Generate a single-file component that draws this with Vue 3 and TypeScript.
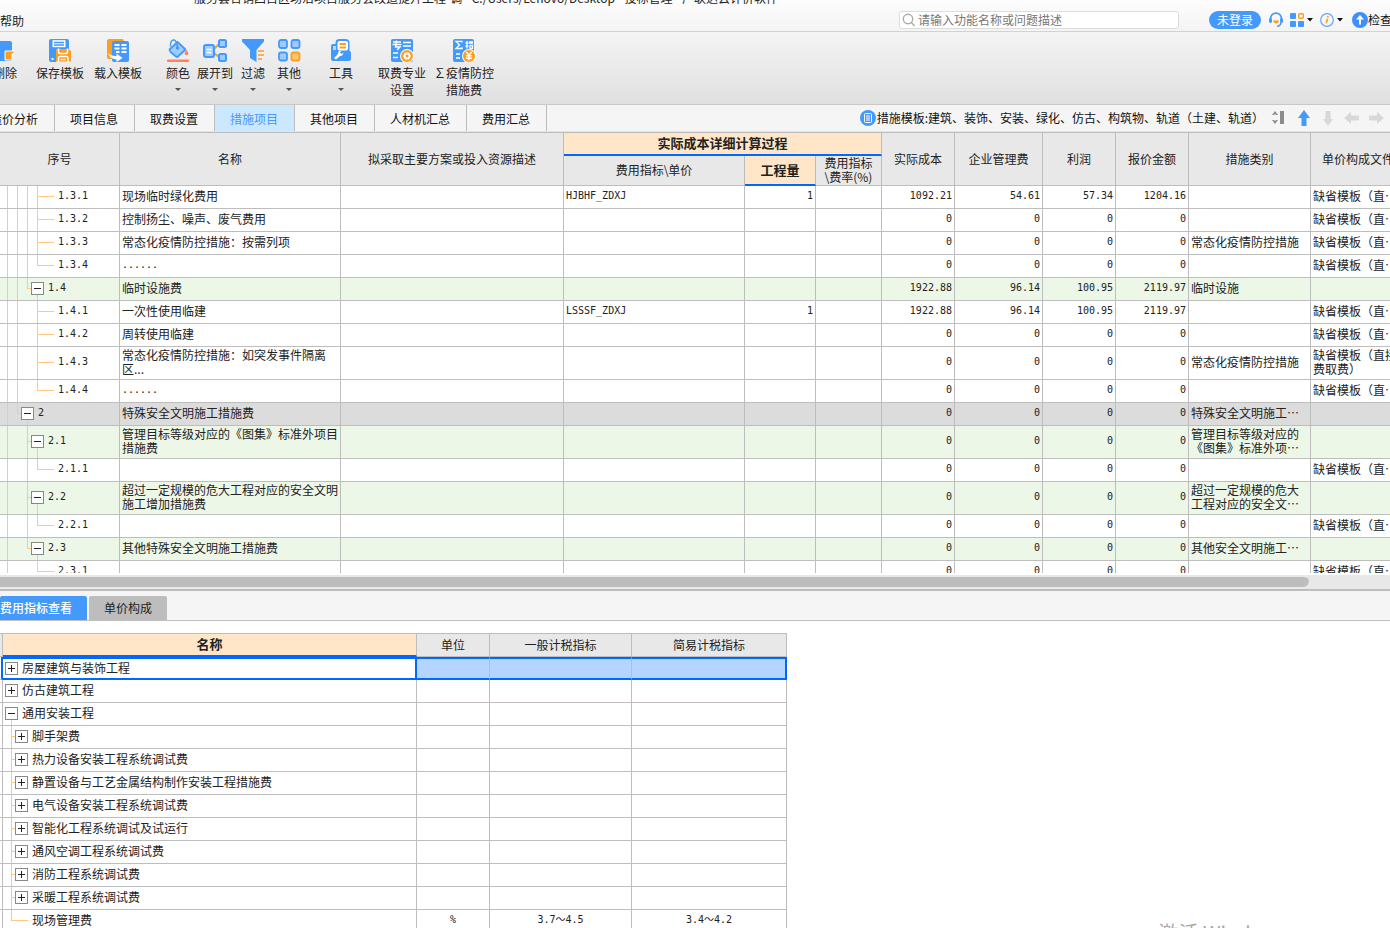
<script setup lang="ts">
import { ref } from 'vue'

type Guide = 'v' | 't' | 'l' | 'n'

interface CostRow {
  no: string
  guides: Guide[]
  open?: boolean
  name: string
  code?: string
  qty?: string
  cost: string
  manage: string
  profit: string
  quote: string
  category?: string
  file?: string
  tone?: 'green' | 'gray'
  tall?: boolean
}

interface IndexRow {
  name: string
  guides: Guide[]
  sign?: '+' | '-'
  unit?: string
  general?: string
  simple?: string
}

const tpl = '缺省模板（直⋯'
const zero = { cost: '0', manage: '0', profit: '0', quote: '0' }
const temp = { cost: '1922.88', manage: '96.14', profit: '100.95', quote: '2119.97' }

const costRows: CostRow[] = [
  { no: '1.3.1', guides: ['v', 'v', 'v', 't'], name: '现场临时绿化费用', code: 'HJBHF_ZDXJ', qty: '1', cost: '1092.21', manage: '54.61', profit: '57.34', quote: '1204.16', file: tpl },
  { no: '1.3.2', guides: ['v', 'v', 'v', 't'], name: '控制扬尘、噪声、废气费用', ...zero, file: tpl },
  { no: '1.3.3', guides: ['v', 'v', 'v', 't'], name: '常态化疫情防控措施：按需列项', ...zero, category: '常态化疫情防控措施', file: tpl },
  { no: '1.3.4', guides: ['v', 'v', 'v', 'l'], name: '......', ...zero, file: tpl },
  { no: '1.4', guides: ['v', 'v', 'l'], open: true, name: '临时设施费', ...temp, category: '临时设施', tone: 'green' },
  { no: '1.4.1', guides: ['v', 'v', 'n', 't'], name: '一次性使用临建', code: 'LSSSF_ZDXJ', qty: '1', ...temp, file: tpl },
  { no: '1.4.2', guides: ['v', 'v', 'n', 't'], name: '周转使用临建', ...zero, file: tpl },
  { no: '1.4.3', guides: ['v', 'v', 'n', 't'], name: '常态化疫情防控措施：如突发事件隔离\n区...', ...zero, category: '常态化疫情防控措施', file: '缺省模板（直接\n费取费）', tall: true },
  { no: '1.4.4', guides: ['v', 'v', 'n', 'l'], name: '......', ...zero, file: tpl },
  { no: '2', guides: ['v', 'l'], open: true, name: '特殊安全文明施工措施费', ...zero, category: '特殊安全文明施工⋯', tone: 'gray' },
  { no: '2.1', guides: ['v', 'n', 't'], open: true, name: '管理目标等级对应的《图集》标准外项目\n措施费', ...zero, category: '管理目标等级对应的\n《图集》标准外项⋯', tone: 'green', tall: true },
  { no: '2.1.1', guides: ['v', 'n', 'v', 'l'], name: '', ...zero, file: tpl },
  { no: '2.2', guides: ['v', 'n', 't'], open: true, name: '超过一定规模的危大工程对应的安全文明\n施工增加措施费', ...zero, category: '超过一定规模的危大\n工程对应的安全文⋯', tone: 'green', tall: true },
  { no: '2.2.1', guides: ['v', 'n', 'v', 'l'], name: '', ...zero, file: tpl },
  { no: '2.3', guides: ['v', 'n', 'l'], open: true, name: '其他特殊安全文明施工措施费', ...zero, category: '其他安全文明施工⋯', tone: 'green' },
  { no: '2.3.1', guides: ['v', 'n', 'n', 'l'], name: '', ...zero, file: tpl },
]

const indexRows: IndexRow[] = [
  { name: '房屋建筑与装饰工程', guides: [], sign: '+' },
  { name: '仿古建筑工程', guides: [], sign: '+' },
  { name: '通用安装工程', guides: [], sign: '-' },
  { name: '脚手架费', guides: ['t'], sign: '+' },
  { name: '热力设备安装工程系统调试费', guides: ['t'], sign: '+' },
  { name: '静置设备与工艺金属结构制作安装工程措施费', guides: ['t'], sign: '+' },
  { name: '电气设备安装工程系统调试费', guides: ['t'], sign: '+' },
  { name: '智能化工程系统调试及试运行', guides: ['t'], sign: '+' },
  { name: '通风空调工程系统调试费', guides: ['t'], sign: '+' },
  { name: '消防工程系统调试费', guides: ['t'], sign: '+' },
  { name: '采暖工程系统调试费', guides: ['t'], sign: '+' },
  { name: '现场管理费', guides: ['l'], unit: '%', general: '3.7～4.5', simple: '3.4～4.2' },
]

const tabs = ['造价分析', '项目信息', '取费设置', '措施项目', '其他项目', '人材机汇总', '费用汇总']
const activeTab = ref('措施项目')
const detailTab = ref('费用指标查看')
const selected = ref(0)
const query = ref('')
</script>

<template>
  <div class="app">
    <header class="top">
      <div class="title">服务套合销四目区场洁项目服务会改造提升工程-调 - C:/Users/Lenovo/Desktop - 投标管理 - 广联达云计价软件</div>
      <div class="menu">
        <button class="plain help" type="button">帮助</button>
        <label class="search">
          <svg width="14" height="14" viewBox="0 0 14 14" fill="none" stroke="#aaa" stroke-width="1.4">
            <circle cx="6" cy="6" r="4.7" />
            <path d="M9.4 9.6 12.6 13" />
          </svg>
          <input v-model="query" type="text" aria-label="搜索功能" placeholder="请输入功能名称或问题描述" />
        </label>
        <button class="login" type="button">未登录</button>
        <button class="plain tool-service" type="button" aria-label="客服">
          <svg width="16" height="16" viewBox="0 0 16 16" fill="none">
            <path d="M2.6 6.5a5.4 5.4 0 0 1 10.8 0" stroke="#4499fc" stroke-width="1.6" />
            <rect x="1" y="6" width="3" height="5" rx="1.4" fill="#4499fc" />
            <rect x="12" y="6" width="3" height="5" rx="1.4" fill="#4499fc" />
            <path d="M13.2 10.5c-.5 2.3-2 3.6-4.2 3.9" stroke="#4499fc" stroke-width="1.4" />
            <path d="M5 8.500h6c-.3 2-1.500 3-3 3s-2.700-1-3-3z" fill="#ff9d1e" />
          </svg>
        </button>
        <button class="plain drop tool-apps" type="button" aria-label="应用">
          <svg width="14" height="14" viewBox="0 0 14 14">
            <rect x="0" y="0" width="6" height="6" rx="1" fill="#4499fc" />
            <rect x="8.7" y="0.7" width="4.6" height="4.6" rx="1" fill="none" stroke="#ff9d1e" stroke-width="1.4" />
            <rect x="0" y="8" width="6" height="6" rx="1" fill="#4499fc" />
            <rect x="8" y="8" width="6" height="6" rx="1" fill="#4499fc" />
          </svg>
          <svg width="6" height="4" viewBox="0 0 6 4"><path d="M0 0h6L3 3.5z" fill="#111" /></svg>
        </button>
        <button class="plain drop tool-info" type="button" aria-label="信息">
          <svg width="14" height="14" viewBox="0 0 14 14" fill="none">
            <circle cx="7" cy="7" r="6.3" stroke="#62a9fa" stroke-width="1.2" />
            <path d="M7.4 5.8 6.3 10.4" stroke="#ff9d1e" stroke-width="1.6" />
            <circle cx="7.9" cy="3.7" r="1" fill="#ff9d1e" />
          </svg>
          <svg width="6" height="4" viewBox="0 0 6 4"><path d="M0 0h6L3 3.5z" fill="#111" /></svg>
        </button>
        <button class="plain check" type="button">
          <svg width="16" height="16" viewBox="0 0 16 16">
            <circle cx="8" cy="8" r="8" fill="#3f8ffb" />
            <path d="M8 3 12 7.5H9V12.5H7V7.5H4z" fill="#fff" />
          </svg>
          <span>检查更新</span>
        </button>
      </div>
    </header>

    <div class="ribbon">
      <div class="group">
        <button class="act w52" type="button">
          <svg width="24" height="24" viewBox="0 0 24 24">
            <rect x="1" y="3" width="18" height="20" rx="2" fill="#4499fc" />
            <path d="M12 13h9v3h-2v6h-7z" fill="#ff9d1e" stroke="#fff" />
          </svg>
          <span>删除</span>
        </button>
        <button class="act w58" type="button">
          <svg width="24" height="24" viewBox="0 0 24 24">
            <path d="M1 3a2 2 0 0 1 2-2h16a2 2 0 0 1 2 2v8H8v13H3a2 2 0 0 1-2-2z" fill="#4499fc" />
            <path d="M4.5 2.2h13v7h-13z" fill="#fff" />
            <path d="M6 4.5h10M6 7h10" stroke="#4499fc" stroke-width="1.3" />
            <rect x="3.5" y="20" width="2" height="2" fill="#fff" />
            <path d="M8 11h12.500l2.500 2v10.500H8z" fill="#ff9d1e" />
            <path d="M10.500 10.500v3.500c0 1 .5 1.500 1.500 1.500h6c1 0 1.500-.5 1.500-1.500v-3.500M10.500 24v-4c0-1 .5-1.500 1.500-1.500h6.500c1 0 1.500.5 1.500 1.500v4M12.500 21.500h5" fill="none" stroke="#fff" stroke-width="1.5" />
          </svg>
          <span>保存模板</span>
        </button>
        <button class="act w58" type="button">
          <svg width="24" height="24" viewBox="0 0 24 24">
            <rect x="1" y="1" width="17" height="20" rx="2" fill="#ff9d1e" />
            <rect x="6" y="3" width="17" height="21" rx="2" fill="#4499fc" />
            <path d="M8.5 7h5M15.5 7h5M8.5 10.5h5M15.5 10.5h5M10 14h3.5M15.5 14h5" stroke="#fff" stroke-width="1.8" />
            <path d="M2 14.500c2 3 5 3.700 8.500 3.500v-2.500l6 4.500-6 4v-2.700C6 21.300 3 19 2 14.500z" fill="#fff" />
          </svg>
          <span>载入模板</span>
        </button>
      </div>
      <div class="group">
        <button class="act w36" type="button">
          <svg width="24" height="24" viewBox="0 0 24 24" fill="none">
            <path d="M3.500 11.500 11.500 4l8 7.500-7.500 7a1.500 1.500 0 0 1-2 0L4.500 14z" fill="#9fccff" stroke="#4499fc" stroke-width="1.8" stroke-linejoin="round" />
            <path d="M4.500 8.500C4 4 6 1.500 8 2s3 3 3.500 7" stroke="#4499fc" stroke-width="1.5" />
            <circle cx="11.500" cy="10" r="1.7" fill="#4499fc" />
            <path d="M20.500 12c1.300 1.700 1.800 2.500 1.800 3.400a1.800 1.800 0 0 1-3.600 0c0-.9.5-1.700 1.800-3.400z" fill="#ff825f" />
            <path d="M2.200 22.700h19.600" stroke="#ff825f" stroke-width="2.6" stroke-linecap="round" />
          </svg>
          <span>颜色</span><i class="caret" />
        </button>
        <button class="act w38" type="button">
          <svg width="24" height="24" viewBox="0 0 24 24" fill="none">
            <path d="m11 11 5-5M11 15l5 4" stroke="#ff9d1e" stroke-width="2" />
            <rect x="1" y="7" width="10" height="12" rx="2" fill="#9fccff" stroke="#4499fc" stroke-width="2" />
            <path d="M3.500 11.500h5M3.500 14.500h5" stroke="#fff" stroke-width="1.4" />
            <rect x="16" y="2" width="7" height="7" rx="1.5" fill="#9fccff" stroke="#4499fc" stroke-width="2" />
            <rect x="16" y="16" width="7" height="7" rx="1.5" fill="#9fccff" stroke="#4499fc" stroke-width="2" />
          </svg>
          <span>展开到</span><i class="caret" />
        </button>
        <button class="act w38" type="button">
          <svg width="24" height="24" viewBox="0 0 24 24">
            <path d="M1 1h22v2.500L15.500 12v12l-6.500-4v-8L1 3.500z" fill="#4499fc" />
            <path d="M17 13h6M17 17h6M17 21h4" stroke="#ff9d1e" stroke-width="1.7" />
          </svg>
          <span>过滤</span><i class="caret" />
        </button>
        <button class="act w34" type="button">
          <svg width="24" height="24" viewBox="0 0 24 24" fill="#9fccff" stroke="#4499fc" stroke-width="1.8">
            <rect x="2" y="2" width="8" height="8" rx="2" />
            <rect x="14.5" y="2" width="8" height="8" rx="2" />
            <rect x="2" y="14.5" width="8" height="8" rx="2" />
            <rect x="14.5" y="14.5" width="8" height="8" rx="2" fill="#ffc56e" stroke="#ff9d1e" />
          </svg>
          <span>其他</span><i class="caret" />
        </button>
      </div>
      <div class="group">
        <button class="act w44" type="button">
          <svg width="24" height="24" viewBox="0 0 24 24">
            <path d="M2 8a2 2 0 0 1 2-2h2.500V5a4 4 0 0 1 4-4h6a4 4 0 0 1 4 4v8a1.500 1.500 0 0 1 1.500 1.500V21a2 2 0 0 1-2 2H4a2 2 0 0 1-2-2z" fill="#4499fc" />
            <path d="M4 8h3v4H4z" fill="#b8d9ff" />
            <rect x="8.5" y="3" width="10.5" height="9.5" rx="2" fill="#fff" />
            <path d="M10.500 6h6.500M10.500 9.500h6.500" stroke="#ff9d1e" stroke-width="1.8" />
            <path d="m5 20 4-4a3 3 0 0 1 3.500-3.500l-1.500 2 1.500 1.500 1.700-1.500A3 3 0 0 1 11 18l-4 3.500z" fill="#fff" />
          </svg>
          <span>工具</span><i class="caret" />
        </button>
      </div>
      <div class="group">
        <button class="act w52" type="button">
          <svg width="24" height="24" viewBox="0 0 24 24" fill="none">
            <rect x="1" y="1" width="22" height="23" rx="2" fill="#4499fc" />
            <path d="M3 4h8M2.500 6.500h9M6.500 2.500 5.500 9H10l-3 3M13 4.500h8M13 8h8M3 15h5M3 19.500h5" stroke="#fff" stroke-width="1.4" />
            <circle cx="17" cy="18" r="7" fill="#fff" />
            <circle cx="17" cy="18" r="6" fill="#ff9d1e" />
            <path d="M15 14.500h4l2 3.500-2 3.500h-4L13 18z" fill="#fff" />
            <circle cx="17" cy="18" r="1.5" fill="#ff9d1e" />
          </svg>
          <span>取费专业<br />设置</span>
        </button>
        <button class="act w72" type="button">
          <svg width="24" height="24" viewBox="0 0 24 24" fill="none">
            <rect x="1" y="1" width="21" height="23" rx="2" fill="#4499fc" />
            <path d="M10 4.500V3.300H4L7.500 7 4 10.500h6V9.300M15 3v7.500M13.500 5h3M13.500 8h3M17 4.500h4M18 3v3M20 3v3M18 7.500h2.500v3H18zM4 16h4M4 20h4" stroke="#fff" stroke-width="1.3" />
            <circle cx="17" cy="18" r="7" fill="#fff" />
            <circle cx="17" cy="18" r="6" fill="#ff9d1e" />
            <path d="m14.300 14 2.700 3.200 2.700-3.200M17 17v5.500M14 17.700h6M14 20.200h6" stroke="#fff" stroke-width="1.4" />
          </svg>
          <span>∑疫情防控<br />措施费</span>
        </button>
      </div>
    </div>

    <nav class="tabbar">
      <button
        v-for="t in tabs"
        :key="t"
        type="button"
        class="tab"
        :class="{ active: t === activeTab }"
        @click="activeTab = t"
      >{{ t }}</button>
      <div class="template">
        <svg width="16" height="16" viewBox="0 0 16 16">
          <circle cx="8" cy="8" r="8" fill="#4499fc" />
          <rect x="4.5" y="3.5" width="7" height="9" rx="1" fill="none" stroke="#fff" />
          <path d="M6 6h4M6 8h4M6 10h4" stroke="#fff" />
        </svg>
        <span>措施模板:建筑、装饰、安装、绿化、仿古、构筑物、轨道（土建、轨道）</span>
      </div>
      <div class="moves">
        <button class="plain" type="button" aria-label="排序">
          <svg width="16" height="16" viewBox="0 0 16 16" fill="#8c8c8c">
            <path d="M0 5 3 1l3 4H4L3 4 2 5zM0 10h2l1 1 1-1h2l-3 4zM8 1h4v13H8z" />
          </svg>
        </button>
        <button class="plain" type="button" aria-label="上移">
          <svg width="16" height="16" viewBox="0 0 16 16"><path d="M8 0 14 8h-3.500v8h-5V8H2z" fill="#4499fc" /></svg>
        </button>
        <button class="plain" type="button" aria-label="下移">
          <svg width="16" height="16" viewBox="0 0 16 16"><path d="M8 16 3 9h2.500V1h5v8H13z" fill="#d8d8d8" /></svg>
        </button>
        <button class="plain" type="button" aria-label="升级">
          <svg width="16" height="16" viewBox="0 0 16 16"><path d="M0 8l7-6v3.500h8v5H7V14z" fill="#d8d8d8" /></svg>
        </button>
        <button class="plain" type="button" aria-label="降级">
          <svg width="16" height="16" viewBox="0 0 16 16"><path d="M16 8 9 2v3.500H1v5h8V14z" fill="#d8d8d8" /></svg>
        </button>
      </div>
    </nav>

    <section class="cost-pane">
      <table class="grid cost">
        <colgroup>
          <col class="c120" /><col class="c221" /><col /><col class="c181" /><col class="c71" /><col class="c66" />
          <col class="c73" /><col class="c88" /><col class="c73" /><col class="c73" /><col class="c122" /><col class="c95" />
        </colgroup>
        <thead>
          <tr class="head-a">
            <th rowspan="2">序号</th>
            <th rowspan="2">名称</th>
            <th rowspan="2">拟采取主要方案或投入资源描述</th>
            <th colspan="3" class="hot">实际成本详细计算过程</th>
            <th rowspan="2">实际成本</th>
            <th rowspan="2">企业管理费</th>
            <th rowspan="2">利润</th>
            <th rowspan="2">报价金额</th>
            <th rowspan="2">措施类别</th>
            <th rowspan="2">单价构成文件</th>
          </tr>
          <tr class="head-b">
            <th>费用指标\单价</th>
            <th class="hot">工程量</th>
            <th>费用指标<br />\费率(%)</th>
          </tr>
        </thead>
        <tbody>
          <tr v-for="r in costRows" :key="r.no" :class="[r.tone, { tall: r.tall }]">
            <td class="tree-cell">
              <div class="tree">
                <span v-for="(g, i) in r.guides" :key="i" class="guide" :class="'g-' + g" />
                <span v-if="r.open" class="node open">
                  <button type="button" class="box" :aria-label="'折叠 ' + r.no" />
                </span>
                <span v-else class="dash" />
                <span class="mono label">{{ r.no }}</span>
              </div>
            </td>
            <td :class="{ mono: r.name === '......' }">{{ r.name }}</td>
            <td />
            <td class="mono">{{ r.code }}</td>
            <td class="mono num">{{ r.qty }}</td>
            <td />
            <td class="mono num">{{ r.cost }}</td>
            <td class="mono num">{{ r.manage }}</td>
            <td class="mono num">{{ r.profit }}</td>
            <td class="mono num">{{ r.quote }}</td>
            <td>{{ r.category }}</td>
            <td>{{ r.file }}</td>
          </tr>
        </tbody>
      </table>
    </section>

    <div class="hscroll"><div class="thumb" /></div>

    <nav class="detail-tabs">
      <button
        v-for="t in ['费用指标查看', '单价构成']"
        :key="t"
        type="button"
        class="dtab"
        :class="{ active: t === detailTab }"
        @click="detailTab = t"
      >{{ t }}</button>
    </nav>

    <section class="index-pane">
      <table class="grid index">
        <colgroup><col class="c3" /><col class="c414" /><col class="c73" /><col class="c142" /><col class="c155" /></colgroup>
        <thead>
          <tr>
            <th />
            <th class="hot">名称</th>
            <th>单位</th>
            <th>一般计税指标</th>
            <th>简易计税指标</th>
          </tr>
        </thead>
        <tbody>
          <tr v-for="(r, i) in indexRows" :key="r.name" :class="{ picked: i === selected }" @click="selected = i">
            <td class="edge" />
            <td class="tree-cell">
              <div class="tree">
                <span v-for="(g, k) in r.guides" :key="k" class="guide" :class="'g-' + g" />
                <span v-if="r.sign" class="node" :class="{ open: r.sign === '-' }">
                  <button type="button" class="box" :class="{ plus: r.sign === '+' }" :aria-label="'切换 ' + r.name" />
                </span>
                <span v-else class="dash" />
                <span class="label">{{ r.name }}</span>
              </div>
            </td>
            <td class="mid mono">{{ r.unit }}</td>
            <td class="mid mono">{{ r.general }}</td>
            <td class="mid mono">{{ r.simple }}</td>
          </tr>
        </tbody>
      </table>
      <div class="watermark">激活 Windows</div>
    </section>
  </div>
</template>

<style>
body {
  margin: 0;
  overflow: hidden;
}
</style>

<style scoped>
.app {
  --line: #bdbdbd;
  --blue: #4499fc;
  --pick: #0068ff;
  --guide: #ffc880;
  display: flex;
  flex-direction: column;
  height: 100vh;
  overflow: hidden;
  background: #fff;
  color: #222;
  font: 12px/16px "Noto Sans CJK SC", "Liberation Sans", sans-serif;
}
button,
input {
  margin: 0;
  padding: 0;
  border: 0;
  background: none;
  color: inherit;
  font: inherit;
}
svg {
  display: block;
  flex: none;
}
.top {
  flex: none;
  background: linear-gradient(#fdfdfd, #f4f4f4);
  border-bottom: 1px solid #d2d2d2;
}
.title {
  display: flex;
  align-items: flex-end;
  height: 6px;
  padding-left: 194px;
  overflow: hidden;
  white-space: nowrap;
}
.menu {
  display: flex;
  align-items: center;
  height: 23px;
  padding-top: 2px;
  white-space: nowrap;
  overflow: hidden;
}
.plain {
  display: flex;
  align-items: center;
}
.help {
  margin-right: auto;
  padding-top: 2px;
}
.search {
  display: flex;
  align-items: center;
  gap: 2px;
  box-sizing: border-box;
  width: 280px;
  height: 18px;
  padding-left: 2px;
  background: #fff;
  border: 1px solid #dcdcdc;
  border-radius: 3px;
}
.search input {
  flex: 1;
  min-width: 0;
  height: 16px;
  outline: 0;
}
.search input::placeholder {
  color: #777;
  opacity: 1;
}
.login {
  width: 52px;
  height: 18px;
  margin: 0 7px 0 30px;
  border-radius: 9px;
  background: var(--blue);
  color: #fff;
}
.drop {
  gap: 3px;
}
.tool-service {
  margin-right: 6px;
}
.tool-apps {
  margin-right: 7px;
}
.tool-info {
  margin-right: 9px;
}
.check {
  width: 38px;
  overflow: hidden;
  color: #111;
}
.ribbon {
  display: flex;
  flex: none;
  gap: 13px;
  height: 72px;
  margin-left: -21px;
  background: linear-gradient(#f4f4f4, #e0e0e0);
  border-bottom: 1px solid #c8c8c8;
}
.group {
  display: flex;
}
.act {
  display: flex;
  flex-direction: column;
  align-items: center;
  padding-top: 6px;
  line-height: 17px;
  white-space: nowrap;
}
.act span {
  margin-top: 2px;
}
.caret {
  margin-top: 7px;
  border: 3px solid transparent;
  border-top-color: #555;
  border-bottom: 0;
}
.w34 { width: 34px; }
.w36 { width: 36px; }
.w38 { width: 38px; }
.w44 { width: 44px; }
.w52 { width: 52px; }
.w58 { width: 58px; }
.w72 { width: 72px; }
.tabbar {
  display: flex;
  flex: none;
  height: 26px;
  padding-right: 6px;
  margin-left: -25px;
  background: #f5f5f5;
  border-bottom: 1px solid #e4e4e4;
  color: #111;
  white-space: nowrap;
}
.tab {
  padding: 2px 16px 0 15px;
  border-right: 1px solid var(--line);
}
.tab.active {
  background: #cce8ff;
  color: var(--blue);
}
.template {
  display: flex;
  align-items: center;
  gap: 1px;
  margin-left: auto;
}
.moves {
  display: flex;
  align-items: center;
  gap: 8px;
  margin-left: 8px;
}
.cost-pane {
  flex: 441 1 0;
  min-height: 0;
  overflow: hidden;
}
.grid {
  border-collapse: separate;
  border-spacing: 0;
  border-top: 1px solid var(--line);
  table-layout: fixed;
}
.cost {
  width: 100%;
  min-width: 1406px;
}
.index {
  width: 787px;
  margin-top: 12px;
}
.c3 { width: 3px; }
.c66 { width: 66px; }
.c71 { width: 71px; }
.c73 { width: 73px; }
.c88 { width: 88px; }
.c95 { width: 95px; }
.c120 { width: 120px; }
.c122 { width: 122px; }
.c142 { width: 142px; }
.c155 { width: 155px; }
.c181 { width: 181px; }
.c221 { width: 221px; }
.c414 { width: 414px; }
th,
td {
  box-sizing: border-box;
  height: 23px;
  padding: 0 2px 2px;
  border-right: 1px solid var(--line);
  border-bottom: 1px solid var(--line);
  line-height: 14px;
  text-align: left;
  vertical-align: middle;
  white-space: pre;
}
th {
  padding: 0 0 1px;
  background: #e8e8e8;
  font-weight: 400;
  text-align: center;
}
.hot {
  background: #ffe6c8;
  border-bottom: 2px solid var(--pick);
  font-size: 13px;
  font-weight: 700;
}
.head-b th {
  height: 30px;
}
.tall td {
  height: 33px;
}
.green td {
  background: #ecf7e7;
}
.gray td {
  background: #dcdcdc;
}
.mono {
  font-family: "DejaVu Sans Mono", "Noto Sans CJK SC", monospace;
  font-size: 10px;
}
.num {
  text-align: right;
}
.mid {
  text-align: center;
}
.tree-cell {
  padding: 0;
}
.tree {
  --mid: 10px;
  display: flex;
  height: 22px;
  padding-left: 2px;
}
.tall .tree {
  --mid: 15px;
  height: 32px;
}
.index .tree {
  padding-left: 3px;
}
.guide {
  width: 10px;
  background-image: linear-gradient(var(--guide), var(--guide)), linear-gradient(var(--guide), var(--guide));
  background-position: 5px 0, 5px var(--mid);
  background-repeat: no-repeat;
}
.g-n {
  background-image: none;
}
.g-v {
  background-size: 1px 100%, 1px 1px;
}
.g-t {
  background-size: 1px 100%, 5px 1px;
}
.g-l {
  background-size: 1px var(--mid), 5px 1px;
}
.dash {
  width: 12px;
  background: linear-gradient(var(--guide), var(--guide)) 0 var(--mid) / 100% 1px no-repeat;
}
.node {
  display: flex;
  align-items: center;
  width: 13px;
  margin-left: -1px;
}
.node.open {
  background: linear-gradient(var(--guide), var(--guide)) 6px 100% / 1px 50% no-repeat;
}
.box {
  width: 13px;
  height: 13px;
  margin-bottom: 1px;
  border: 1px solid #888;
  background: linear-gradient(#222, #222) 50% 50% / 7px 1px no-repeat, #fff;
}
.box.plus {
  background: linear-gradient(#222, #222) 50% 50% / 7px 1px no-repeat, linear-gradient(#222, #222) 50% 50% / 1px 7px no-repeat, #fff;
}
.label {
  align-self: center;
  margin-left: 4px;
  padding-bottom: 2px;
}
.picked td {
  background: #b3d5ff;
  border-top: 2px solid var(--pick);
  border-bottom: 2px solid var(--pick);
}
.picked .edge {
  background: #fff;
  border-top: 0;
  border-bottom: 1px solid var(--line);
  border-right: 2px solid var(--pick);
}
.picked .tree-cell {
  background: #fff;
  border-right: 2px solid var(--pick);
}
.picked td:last-child {
  border-right: 2px solid var(--pick);
}
.picked .tree {
  height: 19px;
}
.edge {
  padding: 0;
}
.hscroll {
  flex: none;
  height: 14px;
  background: #e8e8e8;
  border-top: 2px solid #fff;
  border-bottom: 2px solid var(--line);
}
.thumb {
  width: 94.2%;
  height: 10px;
  background: var(--line);
  border-top: 2px solid #e8e8e8;
  border-radius: 0 6px 6px 0;
}
.detail-tabs {
  display: flex;
  flex: none;
  align-items: flex-end;
  gap: 2px;
  height: 29px;
  background: #f5f5f5;
  border-bottom: 1px solid var(--line);
}
.dtab {
  height: 24px;
  padding: 0 15px;
  border-radius: 2px 2px 0 0;
  background: var(--line);
}
.dtab:first-child {
  padding-left: 0;
}
.dtab.active {
  background: var(--blue);
  color: #fff;
  font-weight: 500;
}
.index-pane {
  position: relative;
  flex: 307 1 0;
  min-height: 0;
  overflow: hidden;
}
.watermark {
  position: absolute;
  right: 102px;
  bottom: -17px;
  color: #a8a8a8;
  font-size: 20px;
  line-height: 24px;
}
</style>
